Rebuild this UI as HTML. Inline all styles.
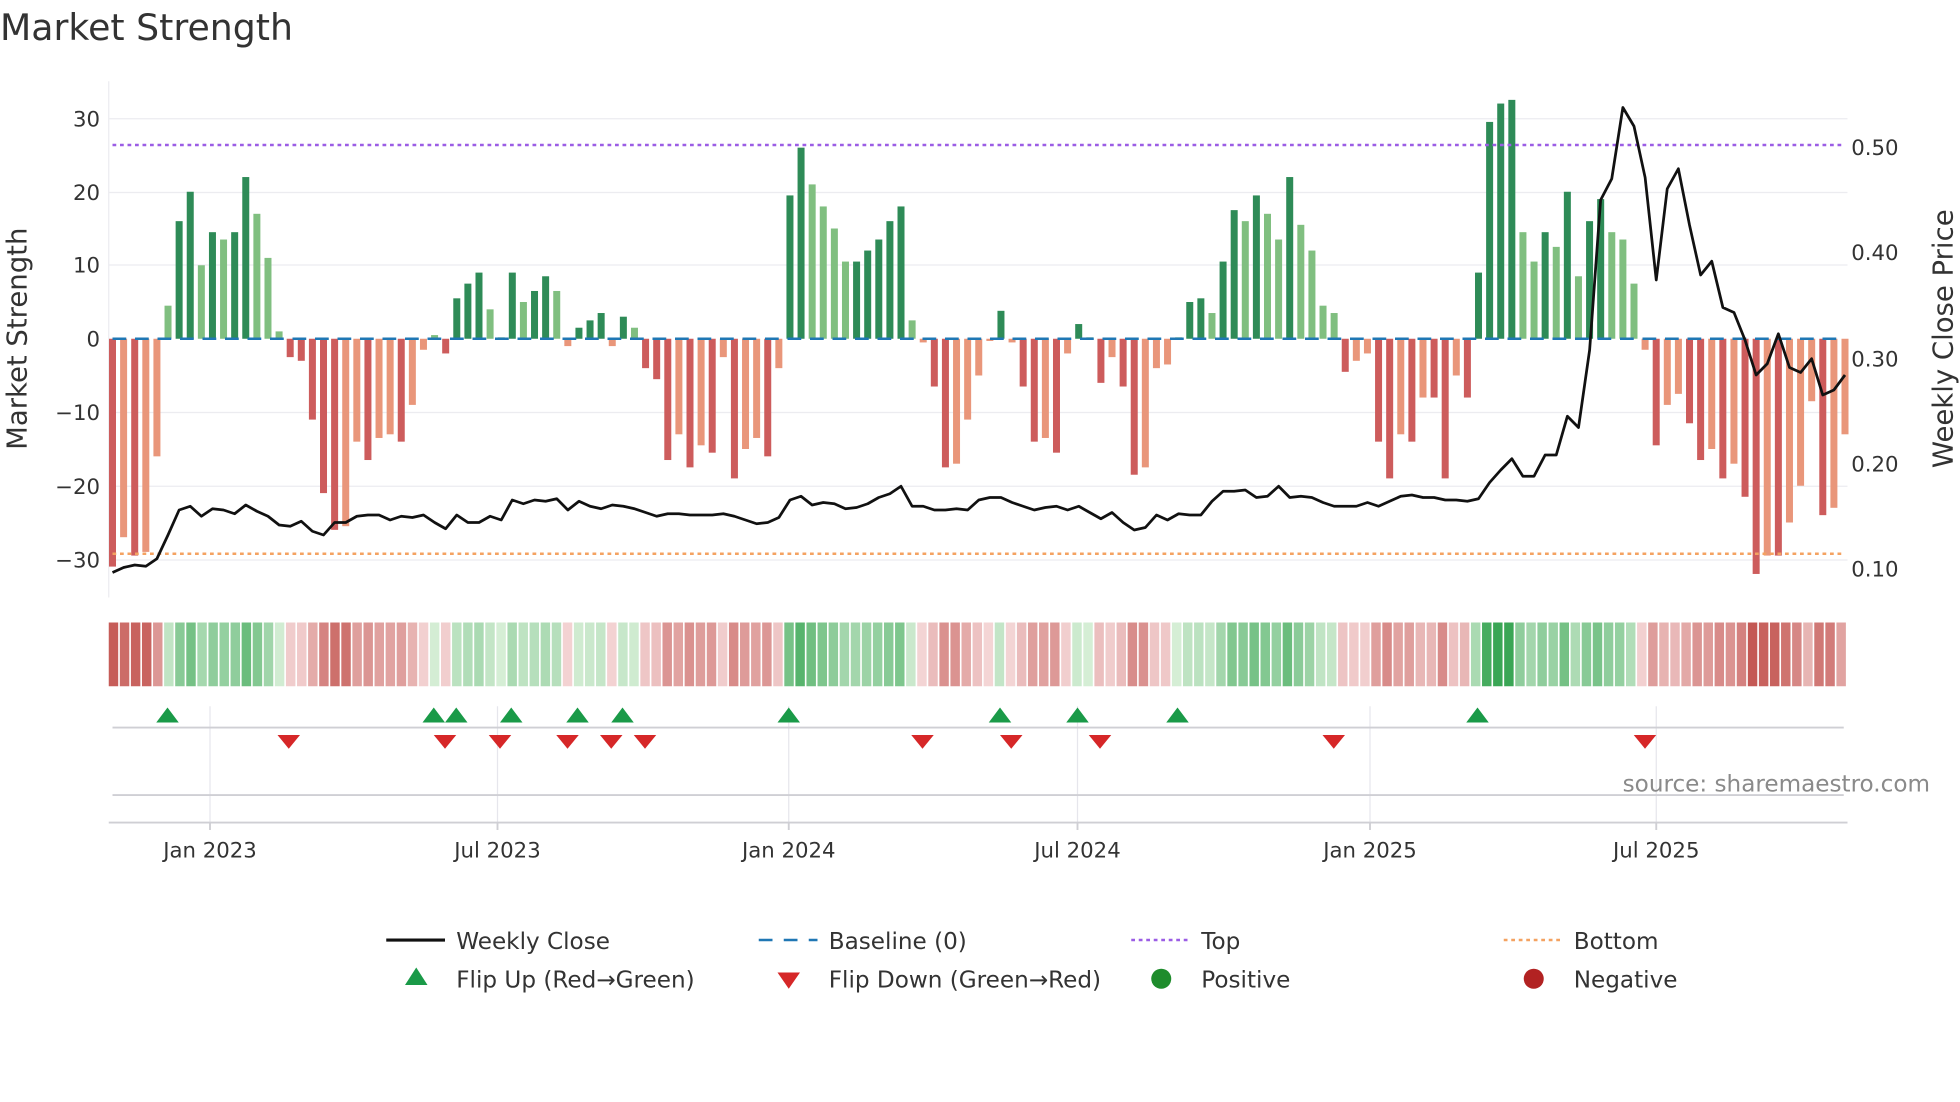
<!DOCTYPE html>
<html><head><meta charset="utf-8"><style>
html,body{margin:0;padding:0;background:#fff;width:1960px;height:1102px;overflow:hidden}
svg{display:block}
text{font-family:"DejaVu Sans","Liberation Sans",sans-serif;fill:#333}
</style></head><body>
<svg id="s" width="1960" height="1102" viewBox="0 0 1568 881.6" xmlns="http://www.w3.org/2000/svg">
<text x="0" y="32" font-size="29" fill="#333">Market Strength</text>
<g stroke="#ececf0" stroke-width="1">
<line x1="87" x2="1478" y1="95" y2="95"/><line x1="87" x2="1478" y1="154" y2="154"/>
<line x1="87" x2="1478" y1="212" y2="212"/><line x1="87" x2="1478" y1="330" y2="330"/>
<line x1="87" x2="1478" y1="389" y2="389"/><line x1="87" x2="1478" y1="448" y2="448"/>
<line x1="87" x2="87" y1="65" y2="478"/>
</g>
<g font-size="17" text-anchor="end">
<text x="80" y="101">30</text><text x="80" y="160">20</text><text x="80" y="218">10</text>
<text x="80" y="277">0</text><text x="80" y="336">−10</text><text x="80" y="395">−20</text><text x="80" y="454">−30</text>
</g>
<g font-size="17">
<text x="1481" y="124">0.50</text><text x="1481" y="208">0.40</text><text x="1481" y="293">0.30</text>
<text x="1481" y="377">0.20</text><text x="1481" y="461">0.10</text>
</g>
<text transform="translate(21,271) rotate(-90)" font-size="22" text-anchor="middle">Market Strength</text>
<text transform="translate(1562,271) rotate(-90)" font-size="22" text-anchor="middle">Weekly Close Price</text>
<g id="bars"></g>
<line x1="90" x2="1475" y1="271" y2="271" stroke="#1f77b4" stroke-width="2" stroke-dasharray="11,7"/>
<line x1="90" x2="1475" y1="116" y2="116" stroke="#9b5de5" stroke-width="2" stroke-dasharray="3,3"/>
<line x1="90" x2="1475" y1="443" y2="443" stroke="#f4a261" stroke-width="2" stroke-dasharray="3,3"/>
<polyline id="price" fill="none" stroke="#111" stroke-width="2.2" stroke-linejoin="round"/>
<g id="heat"></g>
<g stroke="#e6e6ec" stroke-width="1">
<line x1="168" x2="168" y1="565" y2="658"/><line x1="398" x2="398" y1="565" y2="658"/>
<line x1="631" x2="631" y1="565" y2="658"/><line x1="862" x2="862" y1="565" y2="658"/>
<line x1="1096" x2="1096" y1="565" y2="658"/><line x1="1325" x2="1325" y1="565" y2="658"/>
</g>
<line x1="90" x2="1475" y1="582" y2="582" stroke="#cfcfd4" stroke-width="1.5"/>
<line x1="90" x2="1475" y1="636" y2="636" stroke="#cfcfd4" stroke-width="1.5"/>
<line x1="87" x2="1478" y1="658" y2="658" stroke="#cfcfd4" stroke-width="1.5"/>
<g stroke="#cfcfd4" stroke-width="1.5">
<line x1="168" x2="168" y1="658" y2="664"/><line x1="398" x2="398" y1="658" y2="664"/>
<line x1="631" x2="631" y1="658" y2="664"/><line x1="862" x2="862" y1="658" y2="664"/>
<line x1="1096" x2="1096" y1="658" y2="664"/><line x1="1325" x2="1325" y1="658" y2="664"/>
</g>
<g id="marks"></g>
<text x="1544" y="633" font-size="18.5" fill="#8a8a8a" text-anchor="end" style="fill:#8a8a8a">source: sharemaestro.com</text>
<g font-size="17" text-anchor="middle">
<text x="168" y="686">Jan 2023</text><text x="398" y="686">Jul 2023</text><text x="631" y="686">Jan 2024</text>
<text x="862" y="686">Jul 2024</text><text x="1096" y="686">Jan 2025</text><text x="1325" y="686">Jul 2025</text>
</g>
<g font-size="18.5">
<line x1="309" x2="356" y1="752" y2="752" stroke="#111" stroke-width="2.5"/>
<text x="365" y="759">Weekly Close</text>
<line x1="607" x2="654" y1="752" y2="752" stroke="#1f77b4" stroke-width="2" stroke-dasharray="11,9"/>
<text x="663" y="759">Baseline (0)</text>
<line x1="905" x2="952" y1="752" y2="752" stroke="#9b5de5" stroke-width="2" stroke-dasharray="3,3"/>
<text x="961" y="759">Top</text>
<line x1="1203" x2="1250" y1="752" y2="752" stroke="#f4a261" stroke-width="2" stroke-dasharray="3,3"/>
<text x="1259" y="759">Bottom</text>
<polygon points="324,788 342,788 333,774" fill="#1a9a48"/>
<text x="365" y="790">Flip Up (Red→Green)</text>
<polygon points="622,778 640,778 631,791" fill="#d62728"/>
<text x="663" y="790">Flip Down (Green→Red)</text>
<circle cx="929" cy="783" r="8" fill="#1e8c2c"/>
<text x="961" y="790">Positive</text>
<circle cx="1227" cy="783" r="8" fill="#b22222"/>
<text x="1259" y="790">Negative</text>
</g>
</svg>
<script>
var v=[-31,-27,-29.5,-29,-16,4.5,16,20,10,14.5,13.5,14.5,22,17,11,1,-2.5,-3,-11,-21,-26,-25.5,-14,-16.5,-13.5,-13,-14,-9,-1.5,0.5,-2,5.5,7.5,9,4,0.2,9,5,6.5,8.5,6.5,-1,1.5,2.5,3.5,-1,3,1.5,-4,-5.5,-16.5,-13,-17.5,-14.5,-15.5,-2.5,-19,-15,-13.5,-16,-4,19.5,26,21,18,15,10.5,10.5,12,13.5,16,18,2.5,-0.5,-6.5,-17.5,-17,-11,-5,-0.3,3.8,-0.5,-6.5,-14,-13.5,-15.5,-2,2,0.2,-6,-2.5,-6.5,-18.5,-17.5,-4,-3.5,0.2,5,5.5,3.5,10.5,17.5,16,19.5,17,13.5,22,15.5,12,4.5,3.5,-4.5,-3,-2,-14,-19,-13,-14,-8,-8,-19,-5,-8,9,29.5,32,32.5,14.5,10.5,14.5,12.5,20,8.5,16,19,14.5,13.5,7.5,-1.5,-14.5,-9,-7.5,-11.5,-16.5,-15,-19,-17,-21.5,-32,-29.5,-29.5,-25,-20,-8.5,-24,-23,-13];
var NS="http://www.w3.org/2000/svg",n=v.length,step=(1476-90)/(n-1);
var bars=document.getElementById('bars'),heat=document.getElementById('heat');
function el(t,a,p){var e=document.createElementNS(NS,t);for(var k in a)e.setAttribute(k,a[k]);p.appendChild(e);return e;}
function mix(a,b,t){return 'rgb('+[0,1,2].map(function(i){return Math.round(a[i]+(b[i]-a[i])*t)}).join(',')+')';}
for(var i=0;i<n;i++){var x=90+step*i,val=v[i],prev=i>0?v[i-1]:val;
 var strong=Math.abs(val)>=Math.abs(prev);
 var c=val>=0?(strong?'#2e8b57':'#80bf80'):(strong?'#cd5c5c':'#e9967a');
 var h=Math.abs(val)*5.88;el('rect',{x:x-2.8,y:val>=0?271-h:271,width:5.6,height:Math.max(h,0.5),fill:c},bars);
 var t=Math.min(Math.abs(val)/32,1);
 var hc=val>=0?mix([214,238,214],[58,166,85],t):mix([244,214,214],[196,88,84],t);
 el('rect',{x:87+i*(1391/n),y:498,width:1391/n-1.3,height:51,fill:hc},heat);}
var py=[458,454,452,453,447,428,408,405,413,407,408,411,404,409,413,420,421,417,425,428,418,418,413,412,412,416,413,414,412,418,423,412,418,418,413,416,400,403,400,401,399,408,401,405,407,404,405,407,410,413,411,411,412,412,412,411,413,416,419,418,414,400,397,404,402,403,407,406,403,398,395,389,405,405,408,408,407,408,400,398,398,402,405,408,406,405,408,405,410,415,410,418,424,422,412,416,411,412,412,401,393,393,392,398,397,389,398,397,398,402,405,405,405,402,405,401,397,396,398,398,400,400,401,399,386,376,367,381,381,364,364,333,342,280,160,143,86,101,142,224,151,135,180,220,209,246,250,272,300,291,267,294,298,287,316,312,300];
var pts=[];for(var j=0;j<py.length;j++)pts.push((90+(1476-90)/(py.length-1)*j).toFixed(1)+','+py[j]);
document.getElementById('price').setAttribute('points',pts.join(' '));
var m=document.getElementById('marks');
[134,347,365,409,462,498,631,800,862,942,1182].forEach(function(x){el('polygon',{points:(x-9)+',578 '+(x+9)+',578 '+x+',566',fill:'#1a9a48'},m);});
[231,356,400,454,489,516,738,809,880,1067,1316].forEach(function(x){el('polygon',{points:(x-9)+',588 '+(x+9)+',588 '+x+',599',fill:'#d62728'},m);});
</script>
</body></html>
